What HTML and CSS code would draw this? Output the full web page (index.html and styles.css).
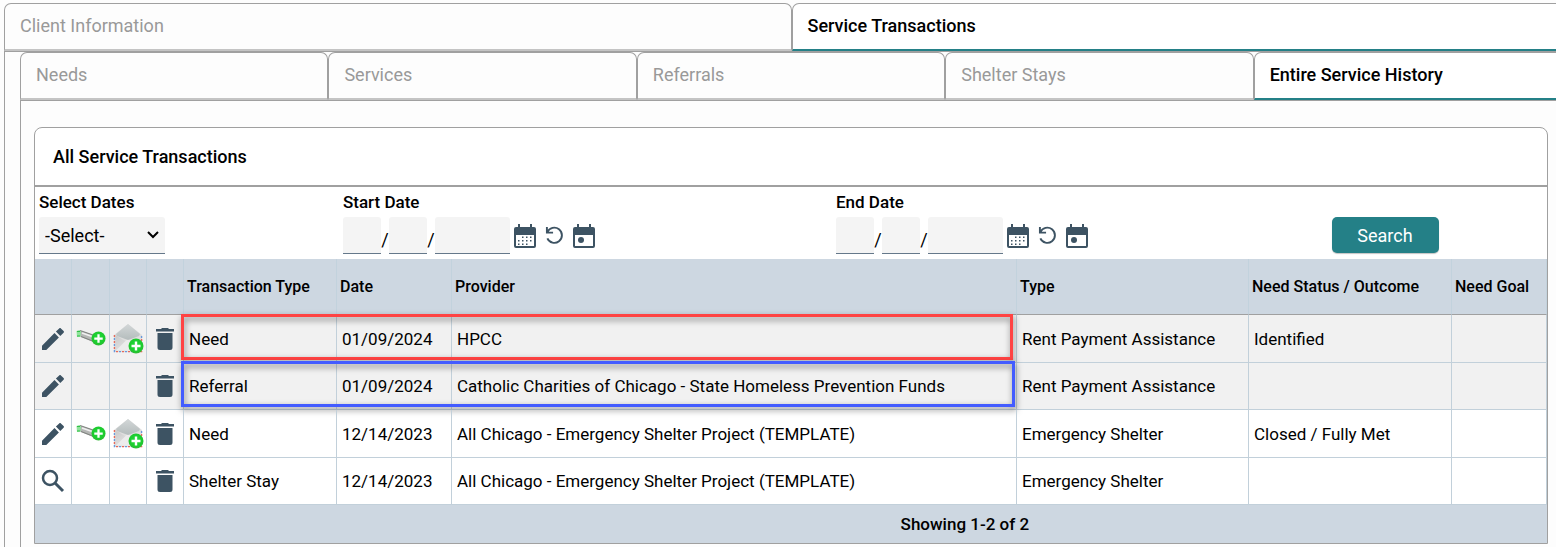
FILE: index.html
```html
<!DOCTYPE html>
<html lang="en">
<head>
    <meta charset="UTF-8">
    <meta name="viewport" content="width=device-width, initial-scale=1.0">
    <title>Service Transactions</title>
    <link rel="stylesheet" href="styles.css">
</head>
<body>

    <!-- Icon sprite -->
    <svg class="sprite" aria-hidden="true">
        <defs>
            <linearGradient id="flap" x1="0" y1="0" x2="0" y2="1">
                <stop offset="0" stop-color="#d3d7d8"/>
                <stop offset="1" stop-color="#b4bcbc"/>
            </linearGradient>
            <linearGradient id="paper" x1="0" y1="0" x2="1" y2="1">
                <stop offset="0" stop-color="#c8c8c8"/>
                <stop offset="1" stop-color="#f2f2f2"/>
            </linearGradient>
            <radialGradient id="green" cx="0.5" cy="0.45" r="0.6">
                <stop offset="0" stop-color="#22dd3c"/>
                <stop offset="0.7" stop-color="#1ccb2e"/>
                <stop offset="1" stop-color="#3fae3c"/>
            </radialGradient>
            <symbol id="i-pencil" viewBox="0 0 24 24">
                <path d="M1 18.7V23h4.3L17.9 10.4l-4.4-4.4zM22.6 5.8c.5-.5.5-1.2 0-1.7L19.9 1.4c-.5-.5-1.2-.5-1.7 0L14.900 4.600l4.400 4.400z"/>
            </symbol>
            <symbol id="i-trash" viewBox="0 0 20 24">
                <path d="M2.500 6h15v14.500a2.500 2.500 0 0 1-2.500 2.500H5a2.500 2.500 0 0 1-2.500-2.500zM1 2h5l1-1h6l1 1h5v2.500H1z"/>
            </symbol>
            <symbol id="i-search" viewBox="0 0 24 24">
                <circle cx="9" cy="9" r="7" fill="none" stroke="currentColor" stroke-width="2.500"/>
                <path d="M14 14l8 8" fill="none" stroke="currentColor" stroke-width="3"/>
            </symbol>
            <symbol id="i-calendar" viewBox="0 0 22 24">
                <path fill-rule="evenodd" d="M4 0h2v3h10V0h2v3h2a2 2 0 0 1 2 2v17a2 2 0 0 1-2 2H2a2 2 0 0 1-2-2V5a2 2 0 0 1 2-2h2zM2 11v11h18V11z"/>
                <path d="M8 12.500h1.500v1.500H8zM12 12.500h1.500v1.500H12zM16 12.500h1.500v1.500H16zM4 16h1.500v1.500H4zM8 16h1.500v1.500H8zM12 16h1.500v1.500H12zM16 16h1.500v1.500H16zM4 19.500h1.500V21H4zM8 19.500h1.500V21H8zM12 19.500h1.500V21H12z"/>
            </symbol>
            <symbol id="i-today" viewBox="0 0 22 24">
                <path fill-rule="evenodd" d="M4 0h2v3h10V0h2v3h2a2 2 0 0 1 2 2v17a2 2 0 0 1-2 2H2a2 2 0 0 1-2-2V5a2 2 0 0 1 2-2h2zM2 11v11h18V11z"/>
                <circle cx="8" cy="16" r="3"/>
            </symbol>
            <symbol id="i-undo" viewBox="0 0 20 20">
                <path d="M2.500 6.500A8 8 0 1 1 2.500 13M2 1v6h6.500" fill="none" stroke="currentColor" stroke-width="2"/>
            </symbol>
            <symbol id="i-plus" viewBox="0 0 16 16">
                <circle cx="8" cy="8" r="7.500" fill="url(#green)"/>
                <path d="M8 3.500v9M3.500 8h9" stroke="#fff" stroke-width="2.400"/>
            </symbol>
            <symbol id="i-key" viewBox="0 0 30 24">
                <path d="M4 3.500L20 9v7L4 9.500z" fill="#b4b6b4"/>
                <path d="M4 3.500L20 9M5 9.500l14 5.500" stroke="#808480" stroke-width="1.200" fill="none"/>
                <path d="M6 6l13 4.500" stroke="#f0f0f0" stroke-width="1.500"/>
                <path d="M0.500 4l3-1 1.500 1.500-.5 5-3.500.5z" fill="#8fe39b"/>
                <path d="M1 4.500h3M1 9h3" stroke="#31bf48" stroke-width="1.200"/>
                <use href="#i-plus" x="15" y="4" width="15" height="15"/>
            </symbol>
            <symbol id="i-mail" viewBox="0 0 31 31">
                <path d="M1 12L15 1l14 11v17H1z" fill="#dedede"/>
                <path d="M1.500 12v16.500h27V12" fill="none" stroke="#e5695a" stroke-width="1.500" stroke-dasharray="2 4"/>
                <path d="M1.500 12v16.500h27V12" fill="none" stroke="#6899dc" stroke-width="1.500" stroke-dasharray="2 4" stroke-dashoffset="3"/>
                <path d="M2.500 12L15 20l12.500-8v16h-25z" fill="url(#paper)"/>
                <path d="M3 27.500l12-12 13 12z" fill="#ececec"/>
                <path d="M3 11L15 1l12 10-1 2-11 4-11-4z" fill="url(#flap)"/>
                <use href="#i-plus" x="15" y="15" width="16" height="16"/>
            </symbol>
        </defs>
    </svg>

    <main class="page">
        <nav class="tabs" aria-label="Client sections">
            <a class="tab" href="#client">Client Information</a>
            <a class="tab active" href="#transactions">Service Transactions</a>
        </nav>

        <div class="tab-panel outer">
            <nav class="tabs" aria-label="Service sections">
                <a class="tab" href="#needs">Needs</a>
                <a class="tab" href="#services">Services</a>
                <a class="tab" href="#referrals">Referrals</a>
                <a class="tab" href="#shelter">Shelter Stays</a>
                <a class="tab active" href="#history">Entire Service History</a>
            </nav>

            <div class="tab-panel inner">
                <section class="card">
                    <h2>All Service Transactions</h2>

                    <form class="filters">
                        <div class="field">
                            <label for="dates">Select Dates</label>
                            <select id="dates">
                                <option>-Select-</option>
                            </select>
                        </div>
                        <div class="field" role="group" aria-labelledby="start-label">
                            <label id="start-label" for="start-month">Start Date</label>
                            <div class="date">
                                <input type="text" id="start-month" maxlength="2">
                                <span>/</span>
                                <input type="text" aria-label="Start day" maxlength="2">
                                <span>/</span>
                                <input type="text" class="year" aria-label="Start year" maxlength="4">
                                <div class="date-tools">
                                    <button type="button" aria-label="Open calendar"><svg class="cal"><use href="#i-calendar"/></svg></button>
                                    <button type="button" aria-label="Reset date"><svg class="undo"><use href="#i-undo"/></svg></button>
                                    <button type="button" aria-label="Today"><svg class="cal"><use href="#i-today"/></svg></button>
                                </div>
                            </div>
                        </div>
                        <div class="field" role="group" aria-labelledby="end-label">
                            <label id="end-label" for="end-month">End Date</label>
                            <div class="date">
                                <input type="text" id="end-month" maxlength="2">
                                <span>/</span>
                                <input type="text" aria-label="End day" maxlength="2">
                                <span>/</span>
                                <input type="text" class="year" aria-label="End year" maxlength="4">
                                <div class="date-tools">
                                    <button type="button" aria-label="Open calendar"><svg class="cal"><use href="#i-calendar"/></svg></button>
                                    <button type="button" aria-label="Reset date"><svg class="undo"><use href="#i-undo"/></svg></button>
                                    <button type="button" aria-label="Today"><svg class="cal"><use href="#i-today"/></svg></button>
                                </div>
                            </div>
                        </div>
                        <button type="button" class="search">Search</button>
                    </form>

                    <table>
                        <colgroup>
                            <col class="c-icon">
                            <col class="c-wide-icon">
                            <col class="c-icon">
                            <col class="c-icon">
                            <col class="c-kind">
                            <col class="c-date">
                            <col>
                            <col class="c-type">
                            <col class="c-status">
                            <col class="c-goal">
                        </colgroup>
                        <thead>
                            <tr>
                                <th></th>
                                <th></th>
                                <th></th>
                                <th></th>
                                <th>Transaction Type</th>
                                <th>Date</th>
                                <th>Provider</th>
                                <th>Type</th>
                                <th>Need Status / Outcome</th>
                                <th>Need Goal</th>
                            </tr>
                        </thead>
                        <tbody>
                            <tr class="shaded">
                                <td class="icon"><button type="button" aria-label="Edit"><svg class="pencil"><use href="#i-pencil"/></svg></button></td>
                                <td class="icon"><button type="button" aria-label="Add service"><svg class="key"><use href="#i-key"/></svg></button></td>
                                <td class="icon"><button type="button" aria-label="Add referral"><svg class="mail"><use href="#i-mail"/></svg></button></td>
                                <td class="icon"><button type="button" aria-label="Delete"><svg class="trash"><use href="#i-trash"/></svg></button></td>
                                <td>Need<span class="mark red"></span></td>
                                <td>01/09/2024</td>
                                <td>HPCC</td>
                                <td>Rent Payment Assistance</td>
                                <td>Identified</td>
                                <td></td>
                            </tr>
                            <tr class="shaded">
                                <td class="icon"><button type="button" aria-label="Edit"><svg class="pencil"><use href="#i-pencil"/></svg></button></td>
                                <td></td>
                                <td></td>
                                <td class="icon"><button type="button" aria-label="Delete"><svg class="trash"><use href="#i-trash"/></svg></button></td>
                                <td>Referral<span class="mark blue"></span></td>
                                <td>01/09/2024</td>
                                <td>Catholic Charities of Chicago - State Homeless Prevention Funds</td>
                                <td>Rent Payment Assistance</td>
                                <td></td>
                                <td></td>
                            </tr>
                            <tr>
                                <td class="icon"><button type="button" aria-label="Edit"><svg class="pencil"><use href="#i-pencil"/></svg></button></td>
                                <td class="icon"><button type="button" aria-label="Add service"><svg class="key"><use href="#i-key"/></svg></button></td>
                                <td class="icon"><button type="button" aria-label="Add referral"><svg class="mail"><use href="#i-mail"/></svg></button></td>
                                <td class="icon"><button type="button" aria-label="Delete"><svg class="trash"><use href="#i-trash"/></svg></button></td>
                                <td>Need</td>
                                <td>12/14/2023</td>
                                <td>All Chicago - Emergency Shelter Project (TEMPLATE)</td>
                                <td>Emergency Shelter</td>
                                <td>Closed / Fully Met</td>
                                <td></td>
                            </tr>
                            <tr>
                                <td class="icon"><button type="button" aria-label="View"><svg class="pencil"><use href="#i-search"/></svg></button></td>
                                <td></td>
                                <td></td>
                                <td class="icon"><button type="button" aria-label="Delete"><svg class="trash"><use href="#i-trash"/></svg></button></td>
                                <td>Shelter Stay</td>
                                <td>12/14/2023</td>
                                <td>All Chicago - Emergency Shelter Project (TEMPLATE)</td>
                                <td>Emergency Shelter</td>
                                <td></td>
                                <td></td>
                            </tr>
                        </tbody>
                    </table>
                    <div class="paging">Showing 1-2 of 2</div>
                </section>
            </div>
        </div>
    </main>

</body>
</html>
```
FILE: styles.css
```css
* {
    box-sizing: border-box;
}

body {
    margin: 0;
    font-family: Roboto, "Liberation Sans", sans-serif;
    font-size: 17px;
    color: #000;
    background-color: #fdfdfd;
    overflow: hidden;
}

.sprite {
    position: absolute;
    width: 0;
    height: 0;
}

svg {
    display: block;
    fill: currentColor;
}

button {
    padding: 0;
    border: none;
    background: none;
    color: #3d5363;
    font-family: inherit;
    cursor: pointer;
}

/* The tab strips run past the right edge of the window */
.page {
    display: flex;
    flex-direction: column;
    min-height: 100vh;
    margin-right: -23px;
    padding: 3px 0 0 4px;
}

/* Tabs */
.tabs {
    display: flex;
}

.tab {
    flex: 1 1 0;
    height: 48px;
    padding: 11px 15px 0;
    border: 1px solid #a0a0a0;
    border-bottom: 2px solid #c4c4c4;
    border-radius: 7px 7px 0 0;
    font-size: 18px;
    line-height: 22px;
    color: #999;
    text-decoration: none;
    white-space: nowrap;
}

.tab.active {
    border-bottom-color: #248087;
    background-color: #fff;
    color: #000;
    font-weight: 500;
}

.tab-panel {
    display: flex;
    flex-direction: column;
    flex: 1;
    border: 1px solid #a0a0a0;
    border-bottom: none;
}

.outer {
    padding: 0 16px 0 15px;
}

.inner {
    padding: 26px 13px 3px;
}

/* Card */
.card {
    border: 1px solid #a0a0a0;
    border-radius: 8px 8px 0 0;
    background-color: #fff;
}

h2 {
    margin: 0;
    padding: 18px 18px 17px;
    border-bottom: 2px solid #a0a0a0;
    font-size: 18px;
    font-weight: 500;
    line-height: 22px;
}

/* Filters */
.filters {
    display: grid;
    grid-template-columns: 304fr 493fr 391fr 324fr;
    align-items: center;
    padding: 4px 0 5px;
}

.field {
    display: flex;
    flex-direction: column;
    align-items: flex-start;
    gap: 4px;
    padding-left: 4px;
}

.field label {
    font-weight: 500;
    line-height: 22px;
}

select,
input {
    height: 37px;
    border: none;
    border-bottom: 1px solid #65788a;
    border-radius: 3px 3px 0 0;
    background-color: #f4f4f4;
    color: #000;
    font-family: inherit;
    font-size: 18px;
}

select {
    width: 126px;
    padding: 0 0 0 6px;
    appearance: none;
    background-image: url("data:image/svg+xml,%3Csvg xmlns='http://www.w3.org/2000/svg' width='12' height='8'%3E%3Cpath d='M1 1l5 5 5-5' fill='none' stroke='%23000' stroke-width='2'/%3E%3C/svg%3E");
    background-repeat: no-repeat;
    background-position: right 6px center;
}

input {
    width: 38px;
    padding: 0 4px;
}

.year {
    width: 75px;
}

.date {
    display: flex;
    align-items: center;
}

.date span {
    width: 8px;
    padding-top: 8px;
    font-size: 18px;
    text-align: center;
}

.date-tools {
    display: flex;
    align-items: center;
    gap: 9px;
    padding-left: 4px;
}

.cal {
    width: 22px;
    height: 24px;
}

.undo {
    width: 19px;
    height: 19px;
}

.search {
    align-self: end;
    justify-self: center;
    width: 107px;
    height: 36px;
    margin-bottom: 1px;
    border-radius: 5px;
    background-color: #248087;
    box-shadow: 0 1px 1px #c4c4c4;
    color: #fff;
    font-size: 18px;
}

/* Transactions table */
table {
    width: 100%;
    border-collapse: separate;
    border-spacing: 0;
    table-layout: fixed;
}

.c-icon { width: 37px; }
.c-wide-icon { width: 38px; }
.c-kind { width: 153px; }
.c-date { width: 115px; }
.c-type { width: 232px; }
.c-status { width: 203px; }
.c-goal { width: 95px; }

th {
    height: 56px;
    padding: 0 3px;
    border-right: 1px solid #c2d2dd;
    border-bottom: 1px solid #a0a0a0;
    background-color: #cdd7e1;
    font-size: 16px;
    font-weight: 500;
    text-align: left;
    white-space: nowrap;
}

td {
    height: 47px;
    padding: 0 5px;
    border-right: 1px solid #c2d0da;
    border-bottom: 1px solid #c2d0da;
    white-space: nowrap;
}

tbody tr {
    position: relative;
}

.shaded {
    background-color: #f1f1f1;
}

td.icon {
    padding: 0;
}

.icon button {
    display: flex;
    align-items: center;
    justify-content: center;
    width: 100%;
}

.pencil {
    width: 24px;
    height: 24px;
}

.trash {
    width: 20px;
    height: 24px;
}

.key {
    width: 30px;
    height: 24px;
}

.mail {
    width: 31px;
    height: 31px;
    margin: 8px 0;
}

/* Coloured frames over the type, date and provider cells */
.mark {
    position: absolute;
    top: -1px;
    bottom: 3px;
    left: 146px;
    right: 534px;
    border: 3px solid;
    filter: drop-shadow(1px 3px 3px rgba(0, 0, 0, 0.5));
    pointer-events: none;
}

.red {
    border-color: #ff4343;
}

.blue {
    top: -2px;
    right: 532px;
    border-color: #435cff;
}

.paging {
    padding: 8px 0 8px 23%;
    background-color: #cdd7e1;
    font-weight: 500;
    line-height: 22px;
    text-align: center;
}
```
